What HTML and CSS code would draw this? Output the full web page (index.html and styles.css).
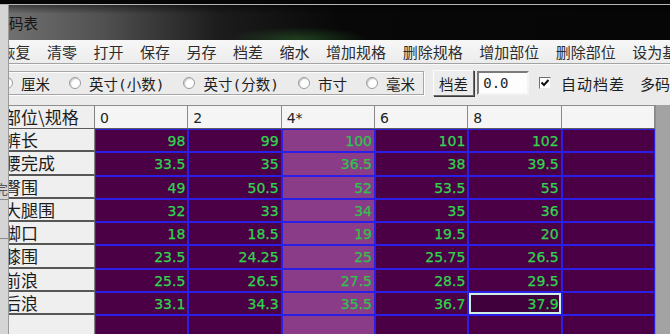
FILE: index.html
```html
<!DOCTYPE html>
<html>
<head>
<meta charset="utf-8">
<link rel="stylesheet" href="styles.css">
</head>
<body>
<div class="screen">
  <div class="topedge"></div>
  <div class="frame">
    <div class="strip">
      <span class="ghost">完</span>
      <span class="sline s1"></span>
      <span class="sline s2"></span>
    </div>
    <div class="app">
      <div class="titlebar"><span class="title">码表</span></div>
      <div class="menubar">
        <span>恢复</span><span>清零</span><span>打开</span><span>保存</span><span>另存</span><span>档差</span><span>缩水</span><span>增加规格</span><span>删除规格</span><span>增加部位</span><span>删除部位</span><span>设为基码</span>
      </div>
      <div class="toolbar">
        <div class="group">
          <span class="opt"><i class="radio"></i>厘米</span>
          <span class="opt"><i class="radio"></i>英寸(小数)</span>
          <span class="opt"><i class="radio"></i>英寸(分数)</span>
          <span class="opt"><i class="radio"></i>市寸</span>
          <span class="opt last"><i class="radio"></i>毫米</span>
        </div>
        <span class="btn">档差</span>
        <span class="input">0.0</span>
        <span class="check"><svg width="10" height="10" viewBox="0 0 10 10"><path d="M1.5 4.5 L4 7 L8.5 2" fill="none" stroke="#111" stroke-width="2"/></svg></span>
        <span class="chklabel">自动档差</span>
        <span class="more">多码</span>
      </div>
      <div class="gridwrap">
        <div class="grid">
          <div class="hd lab">部位\规格</div><div class="hd">0</div><div class="hd">2</div><div class="hd">4*</div><div class="hd">6</div><div class="hd">8</div><div class="hd"></div>

          <div class="lab">裤长</div><div class="c">98</div><div class="c">99</div><div class="c base">100</div><div class="c">101</div><div class="c">102</div><div class="c"></div>
          <div class="lab">腰完成</div><div class="c">33.5</div><div class="c">35</div><div class="c base">36.5</div><div class="c">38</div><div class="c">39.5</div><div class="c"></div>
          <div class="lab">臀围</div><div class="c">49</div><div class="c">50.5</div><div class="c base">52</div><div class="c">53.5</div><div class="c">55</div><div class="c"></div>
          <div class="lab">大腿围</div><div class="c">32</div><div class="c">33</div><div class="c base">34</div><div class="c">35</div><div class="c">36</div><div class="c"></div>
          <div class="lab">脚口</div><div class="c">18</div><div class="c">18.5</div><div class="c base">19</div><div class="c">19.5</div><div class="c">20</div><div class="c"></div>
          <div class="lab">膝围</div><div class="c">23.5</div><div class="c">24.25</div><div class="c base">25</div><div class="c">25.75</div><div class="c">26.5</div><div class="c"></div>
          <div class="lab">前浪</div><div class="c">25.5</div><div class="c">26.5</div><div class="c base">27.5</div><div class="c">28.5</div><div class="c">29.5</div><div class="c"></div>
          <div class="lab">后浪</div><div class="c">33.1</div><div class="c">34.3</div><div class="c base">35.5</div><div class="c">36.7</div><div class="c sel">37.9</div><div class="c"></div>
          <div class="lab"></div><div class="c"></div><div class="c"></div><div class="c base"></div><div class="c"></div><div class="c"></div><div class="c"></div>
        </div>
        <div class="vscroll"></div>
      </div>
    </div>
  </div>
</div>
</body>
</html>
```

FILE: styles.css
```css
html, body {
  margin: 0;
  padding: 0;
  background: #e9e9e9;
}
.screen {
  width: 670px;
  height: 334px;
  overflow: hidden;
  display: flex;
  flex-direction: column;
  background: #ebebeb;
  font-family: "Noto Sans CJK SC", sans-serif;
}
.topedge {
  height: 4px;
  flex: none;
  background: #060606;
  border-bottom: 1px solid #b5b5b5;
}
.frame {
  flex: 1;
  display: flex;
  min-height: 0;
}
.strip {
  width: 8px;
  flex: none;
  background: #d5d5d5;
  border-right: 1px solid #9a9a9a;
  overflow: hidden;
  display: flex;
  flex-direction: column;
}
.ghost {
  margin-top: 176px;
  margin-left: -5px;
  font-size: 13px;
  line-height: 16px;
  color: #555;
  white-space: nowrap;
}
.sline {
  display: block;
  height: 0;
  border-top: 1px solid #8a8a8a;
}
.s1 { margin-top: 2px; }
.s2 { margin-top: 38px; }
.app {
  flex: 1;
  min-width: 0;
  display: flex;
  flex-direction: column;
  overflow: hidden;
}
.titlebar {
  height: 35px;
  flex: none;
  display: flex;
  align-items: center;
  background:
    linear-gradient(180deg, rgba(0,0,0,0.45) 0, rgba(0,0,0,0) 9px),
    radial-gradient(ellipse 70px 12px at 290px 34px, rgba(50,120,50,0.45), rgba(0,0,0,0)),
    linear-gradient(90deg, #707070 0, #525252 90px, #1c1c1c 210px, #080808 330px, #060606 100%);
}
.title {
  font-size: 14.5px;
  color: #151515;
  line-height: 18px;
}
.menubar {
  height: 23px;
  flex: none;
  display: flex;
  align-items: center;
  gap: 16.5px;
  margin-left: -8.5px;
  font-size: 15px;
  color: #2c2c2c;
  white-space: nowrap;
  background: linear-gradient(180deg, #f7f7f7, #ececec);
  border-bottom: 1px solid #a3a3a3;
  box-shadow: 0 1px 0 #fafafa;
}
.menubar span { flex: none; }
.toolbar {
  height: 36px;
  flex: none;
  display: flex;
  align-items: center;
  white-space: nowrap;
  font-size: 14.5px;
  color: #1e1e1e;
  margin-top: 1px;
}
.group {
  height: 24px;
  box-sizing: border-box;
  display: flex;
  align-items: center;
  margin-left: -9px;
  padding-right: 8px;
  border: 1px solid #a6a6a6;
  box-shadow: inset 1px 1px 0 #fdfdfd, 1px 1px 0 #fdfdfd;
  font-family: "DejaVu Sans Mono", "Noto Sans CJK SC", monospace;
}
.opt {
  display: flex;
  align-items: center;
  gap: 8px;
  margin-right: 19px;
}
.opt.last { margin-right: 0; }
.radio {
  width: 12px;
  height: 12px;
  box-sizing: border-box;
  border-radius: 50%;
  border: 1px solid #9c9c9c;
  background: radial-gradient(circle at 60% 60%, #ffffff 0 45%, #e2e2e2 80%);
  box-shadow: inset 1px 1px 1px rgba(0,0,0,0.15);
}
.btn {
  margin-left: 9px;
  width: 47px;
  height: 26px;
  box-sizing: border-box;
  display: flex;
  align-items: center;
  justify-content: center;
  background: #ececec;
  border: 1px solid;
  border-color: #fdfdfd #6d6d6d #6d6d6d #fdfdfd;
  box-shadow: 1px 1px 0 #3a3a3a;
}
.input {
  margin-left: 3px;
  width: 58px;
  height: 24px;
  box-sizing: border-box;
  display: flex;
  align-items: center;
  padding-left: 4px;
  background: #fdfdfd;
  border: 2px solid;
  border-color: #7b7b7b #f4f4f4 #f4f4f4 #7b7b7b;
  font-family: "DejaVu Sans Mono", monospace;
  font-size: 14px;
  color: #222;
}
.check {
  margin-left: 10px;
  width: 12px;
  height: 12px;
  box-sizing: border-box;
  display: flex;
  align-items: center;
  justify-content: center;
  background: #fff;
  border: 1px solid;
  border-color: #6f6f6f #eaeaea #eaeaea #6f6f6f;
}
.chklabel {
  margin-left: 10px;
  font-size: 15px;
  letter-spacing: 1px;
}
.more {
  margin-left: 15px;
  font-size: 15px;
}
.gridwrap {
  flex: 1;
  min-height: 0;
  display: flex;
  padding-top: 4px;
}
.grid {
  display: grid;
  grid-template-columns: 86px repeat(6, 93.33px);
  grid-template-rows: 24px repeat(8, 23.25px) 30px;
  align-content: start;
}
.vscroll {
  flex: 1;
  background: #a3a3a3;
  border-left: 1px solid #8c8c8c;
}
.hd {
  box-sizing: border-box;
  background: #f5f5f5;
  border-top: 1px solid #8e8e8e;
  border-right: 1px solid #8a8a8a;
  border-bottom: 1px solid #5a5a5a;
  font-family: "DejaVu Sans", sans-serif;
  font-size: 14px;
  color: #222;
  line-height: 22px;
  padding-left: 5px;
  padding-top: 1px;
  white-space: nowrap;
  overflow: hidden;
}
.hd.lab {
  padding-left: 0;
  padding-top: 0;
  border-bottom: 1px solid #5a5a5a;
  line-height: 22px;
}
.lab {
  box-sizing: border-box;
  background: #efefef;
  border-right: 1px solid #828282;
  border-bottom: 2px solid #565656;
  font-family: "Noto Sans CJK SC", sans-serif;
  font-size: 17px;
  color: #1c1c1c;
  line-height: 21px;
  text-indent: -5px;
  white-space: nowrap;
  overflow: hidden;
}
.c {
  box-sizing: border-box;
  background: #4b0046;
  border: 1px solid #2b1ee6;
  font-family: "DejaVu Sans", sans-serif;
  font-size: 14px;
  color: #2fd54d;
  -webkit-text-stroke: 0.25px #2fd54d;
  text-align: right;
  padding-right: 2px;
  padding-top: 2px;
  line-height: 19px;
}
.c.base {
  background: #8b3c89;
  color: #2cc44a;
  -webkit-text-stroke: 0.25px #2cc44a;
}
.c.sel {
  background: #3f003b;
  box-shadow: inset 0 0 0 2px #d0efe3;
}
```
